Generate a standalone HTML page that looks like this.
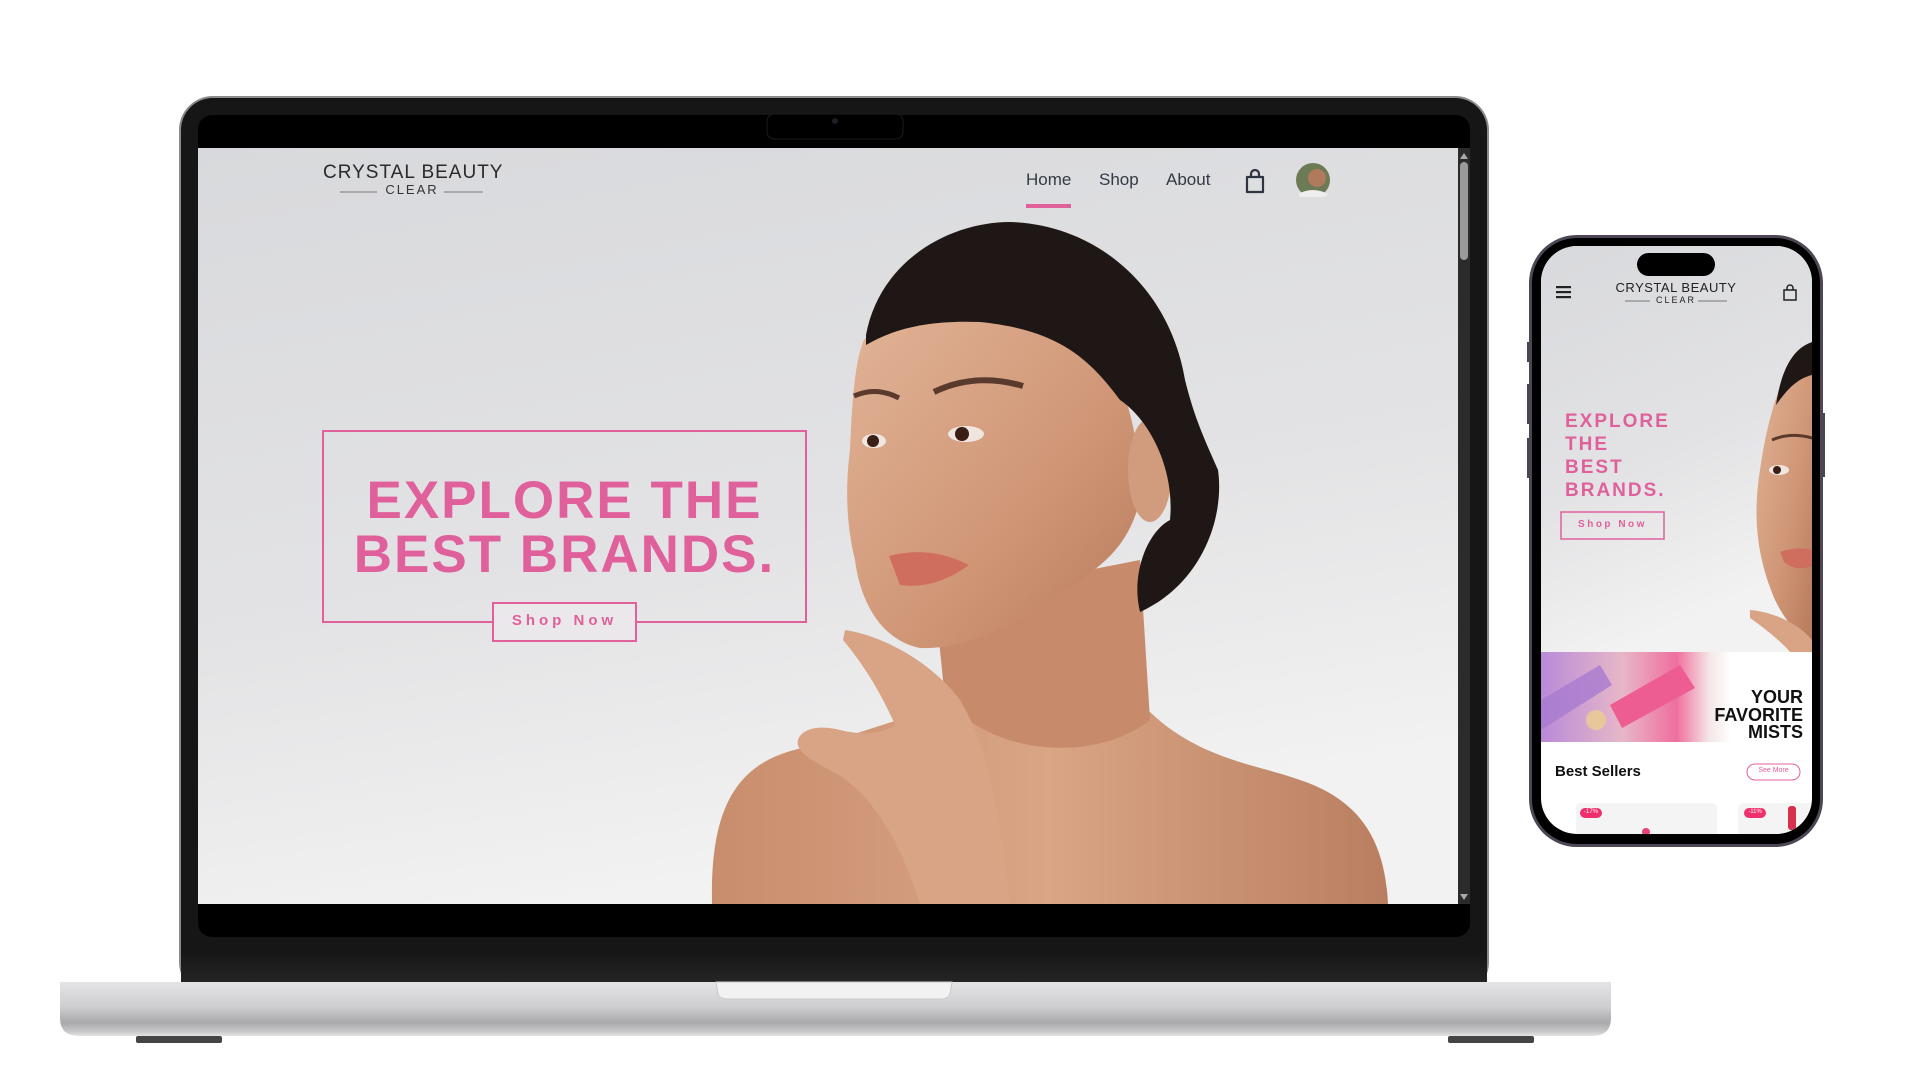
<!DOCTYPE html>
<html><head><meta charset="utf-8"><style>
*{margin:0;padding:0;box-sizing:border-box}
body{width:1920px;height:1080px;background:#fff;position:relative;overflow:hidden;font-family:"Liberation Sans",sans-serif}
.a{position:absolute;white-space:nowrap}
.pink{color:#e0609c}
</style></head><body>
<svg class="a" style="left:0;top:0" width="1920" height="1080" viewBox="0 0 1920 1080">
<defs>
<linearGradient id="web" x1="0" y1="0" x2="0.3" y2="1"><stop offset="0" stop-color="#d8d9dc"/><stop offset="0.6" stop-color="#e3e3e5"/><stop offset="1" stop-color="#f2f2f2"/></linearGradient>
<linearGradient id="base" x1="0" y1="0" x2="0" y2="1"><stop offset="0" stop-color="#e4e4e6"/><stop offset="0.45" stop-color="#cfcfd1"/><stop offset="0.75" stop-color="#a9a9ab"/><stop offset="0.92" stop-color="#c8c8ca"/><stop offset="1" stop-color="#e6e6e6"/></linearGradient>
<linearGradient id="chin" x1="0" y1="0" x2="0" y2="1"><stop offset="0" stop-color="#151515"/><stop offset="1" stop-color="#262626"/></linearGradient>
<linearGradient id="skin" x1="0" y1="0" x2="1" y2="1"><stop offset="0" stop-color="#e2b497"/><stop offset="0.6" stop-color="#cf9676"/><stop offset="1" stop-color="#b77b5c"/></linearGradient>
<linearGradient id="body" x1="0" y1="0" x2="1" y2="0"><stop offset="0" stop-color="#c88d6d"/><stop offset="0.5" stop-color="#d9a585"/><stop offset="1" stop-color="#b97e60"/></linearGradient>
<linearGradient id="strip" x1="0" y1="0" x2="1" y2="0"><stop offset="0" stop-color="#b98ad8"/><stop offset="0.3" stop-color="#e7b7c8"/><stop offset="0.5" stop-color="#ef6f9e"/><stop offset="0.62" stop-color="#f4e6e6"/><stop offset="0.7" stop-color="#fff"/></linearGradient>
<clipPath id="scr"><rect x="198" y="148" width="1260" height="756"/></clipPath>
<clipPath id="pscr"><rect x="1541" y="246" width="271" height="588" rx="36"/></clipPath>
</defs>
<rect x="179" y="96" width="1310" height="900" rx="34" fill="#8a8a8c"/>
<rect x="181" y="98" width="1306" height="896" rx="32" fill="#161616"/>
<rect x="198" y="115" width="1272" height="822" rx="14" fill="#000"/>
<rect x="181" y="951" width="1306" height="34" fill="url(#chin)"/>
<rect x="767" y="114" width="136" height="25" rx="7" fill="#000" stroke="#1c1c1c"/>
<circle cx="835" cy="121" r="3" fill="#1d1f26"/>
<rect x="198" y="148" width="1272" height="756" fill="url(#web)"/>
<g clip-path="url(#scr)">
<path d="M712 904 C710 800 740 755 820 745 L960 700 L1150 712 C1200 760 1260 765 1300 780 C1360 800 1385 840 1388 904 Z" fill="url(#body)"/>
<path d="M935 600 L1140 560 L1150 720 C1100 760 1000 760 945 700 Z" fill="#c78b6c"/>
<path d="M864 340 C900 300 980 290 1060 320 C1120 350 1140 420 1140 500 C1130 540 1110 560 1080 580 C1040 610 980 650 920 648 C880 640 860 600 855 560 C845 520 846 480 850 450 C852 400 855 360 864 340 Z" fill="url(#skin)"/>
<ellipse cx="1150" cy="470" rx="22" ry="52" fill="#d19c7d"/>
<path d="M866 335 C880 260 950 222 1010 222 C1100 225 1170 290 1185 380 C1195 420 1205 440 1218 470 C1225 520 1200 585 1140 612 C1130 570 1150 530 1170 520 C1175 470 1150 420 1120 400 C1090 360 1060 330 980 322 C930 320 895 328 866 345 Z" fill="#1f1715"/>
<path d="M854 396 Q876 386 899 398" stroke="#5a3a2c" stroke-width="5" fill="none"/>
<path d="M934 392 Q975 372 1023 386" stroke="#5a3a2c" stroke-width="6" fill="none"/>
<ellipse cx="874" cy="441" rx="12" ry="7" fill="#f0e6e0"/><circle cx="873" cy="441" r="6" fill="#3a1f14"/>
<ellipse cx="966" cy="434" rx="18" ry="8" fill="#f0e6e0"/><circle cx="962" cy="434" r="7" fill="#3a1f14"/>
<path d="M889 556 Q930 545 969 565 Q935 590 900 585 Z" fill="#cf6e5e"/>
<path d="M845 630 C880 635 930 660 960 700 C990 750 1000 820 1010 904 L920 904 C900 840 870 790 830 770 C810 760 795 750 798 740 C802 728 820 725 840 730 C860 735 880 735 895 725 C880 690 860 660 843 640 Z" fill="#d9a486"/>
</g>
<rect x="1458" y="148" width="12" height="756" fill="#2b2b2b"/>
<rect x="1460" y="162" width="8" height="98" rx="4" fill="#9a9a9a"/>
<path d="M1460 159 L1464 153 L1468 159 Z" fill="#aaa"/><path d="M1460 894 L1464 900 L1468 894 Z" fill="#aaa"/>
<rect x="323" y="431" width="483" height="191" fill="none" stroke="#e0609c" stroke-width="2"/>
<rect x="493" y="603" width="143" height="38" fill="#ebe8eb" stroke="#e0609c" stroke-width="2"/>
<line x1="340" y1="192" x2="377" y2="192" stroke="#999" stroke-width="1.5"/><line x1="444" y1="192" x2="483" y2="192" stroke="#999" stroke-width="1.5"/>
<rect x="1026" y="204" width="45" height="4" fill="#e0609c"/>
<path d="M1247 177 h16 v15 h-16 Z M1251 177 v-3 a4 4 0 0 1 8 0 v3" stroke="#2e3440" stroke-width="2.2" fill="none" stroke-linejoin="round"/>
<circle cx="1313" cy="180" r="17" fill="#6c7a55"/><circle cx="1317" cy="178" r="9" fill="#b07a5c"/><path d="M1298 194 Q1313 186 1328 194 L1325 197 L1300 197Z" fill="#eee"/>
<path d="M60 982 L1611 982 L1611 1018 Q1611 1036 1592 1036 L79 1036 Q60 1036 60 1018 Z" fill="url(#base)"/>
<path d="M716 982 L952 982 L950 994 Q948 999 940 999 L728 999 Q720 999 718 994 Z" fill="#f2f2f2" stroke="#c9c9c9"/>
<rect x="136" y="1036" width="86" height="7" rx="2" fill="#444"/>
<rect x="1448" y="1036" width="86" height="7" rx="2" fill="#444"/>
<rect x="1527" y="342" width="3" height="20" fill="#4a4450"/><rect x="1527" y="384" width="3" height="40" fill="#4a4450"/><rect x="1527" y="438" width="3" height="40" fill="#4a4450"/><rect x="1822" y="413" width="3" height="64" fill="#4a4450"/>
<rect x="1529" y="235" width="294" height="612" rx="48" fill="#4d4655"/>
<rect x="1532" y="238" width="288" height="606" rx="45" fill="#000"/>
<rect x="1541" y="246" width="271" height="588" rx="36" fill="#fff"/>
<g clip-path="url(#pscr)">
<rect x="1541" y="246" width="271" height="406" fill="url(#web)"/>
<path d="M1812 345 C1790 352 1770 400 1760 470 C1752 520 1758 560 1775 600 C1790 630 1805 640 1812 640 Z" fill="url(#skin)"/>
<path d="M1812 342 C1795 348 1782 365 1776 405 C1790 385 1800 378 1812 375 Z" fill="#1f1715"/>
<ellipse cx="1779" cy="470" rx="10" ry="5" fill="#f0e6e0"/><circle cx="1777" cy="470" r="4" fill="#3a1f14"/>
<path d="M1772 440 Q1790 432 1812 438" stroke="#5a3a2c" stroke-width="3" fill="none"/>
<path d="M1780 552 Q1798 546 1812 550 L1812 566 Q1795 572 1784 562Z" fill="#cf6e5e"/>
<path d="M1750 610 C1775 612 1800 625 1812 640 L1812 652 L1790 652 C1780 640 1760 625 1750 618Z" fill="#d9a486"/>
<rect x="1541" y="652" width="271" height="90" fill="url(#strip)"/>
<path d="M1541 700 L1600 665 L1612 685 L1541 730Z" fill="#a77ad0" opacity=".8"/>
<path d="M1610 705 L1680 665 L1695 688 L1622 728Z" fill="#ee5d92"/>
<circle cx="1596" cy="720" r="10" fill="#e8c89a"/>
<rect x="1576" y="803" width="141" height="40" rx="5" fill="#f4f4f5"/>
<rect x="1738" y="803" width="80" height="40" rx="5" fill="#f4f4f5"/>
<rect x="1580" y="808" width="22" height="10" rx="5" fill="#f0306c"/>
<rect x="1744" y="808" width="22" height="10" rx="5" fill="#f0306c"/>
<rect x="1788" y="806" width="8" height="24" rx="3" fill="#d8304e"/>
<circle cx="1646" cy="832" r="4" fill="#e8407a"/>
</g>
<rect x="1637" y="253" width="78" height="23" rx="11.5" fill="#000"/>
<rect x="1556" y="286" width="15" height="2.2" fill="#222"/><rect x="1556" y="291" width="15" height="2.2" fill="#222"/><rect x="1556" y="296" width="15" height="2.2" fill="#222"/>
<path d="M1784 290 h12 v10 h-12 Z M1787 290 v-2 a3 3 0 0 1 6 0 v2" stroke="#222" stroke-width="1.5" fill="none"/>
<line x1="1625" y1="301" x2="1650" y2="301" stroke="#555" stroke-width="0.8"/><line x1="1698" y1="301" x2="1727" y2="301" stroke="#555" stroke-width="0.8"/>
<rect x="1561" y="512" width="103" height="27" fill="none" stroke="#e0609c" stroke-width="1.5"/>
<rect x="1747" y="764" width="53" height="16" rx="8" fill="#fff" stroke="#e0609c" stroke-width="1"/>
</svg>
<div class="a" style="left:323px;top:163px;width:178px;text-align:center;font-size:19px;letter-spacing:1px;color:#2a2a2a;line-height:20px">CRYSTAL BEAUTY</div>
<div class="a" style="left:323px;top:183px;width:178px;text-align:center;font-size:13px;letter-spacing:2px;color:#333;line-height:14px">CLEAR</div>
<div class="a" style="left:1026px;top:170px;font-size:17px;color:#333a45">Home</div>
<div class="a" style="left:1099px;top:170px;font-size:17px;color:#333a45">Shop</div>
<div class="a" style="left:1166px;top:170px;font-size:17px;color:#333a45">About</div>
<div class="a pink" style="left:323px;top:474px;width:483px;text-align:center;font-size:53px;font-weight:bold;letter-spacing:2px;line-height:54px">EXPLORE THE<br>BEST BRANDS.</div>
<div class="a pink" style="left:493px;top:612px;width:143px;text-align:center;font-size:15px;font-weight:bold;letter-spacing:4px">Shop Now</div>
<div class="a" style="left:1613px;top:281px;width:126px;text-align:center;font-size:13px;letter-spacing:0.5px;color:#222;line-height:14px">CRYSTAL BEAUTY</div>
<div class="a" style="left:1613px;top:295px;width:126px;text-align:center;font-size:9px;letter-spacing:2px;color:#222;line-height:10px">CLEAR</div>
<div class="a pink" style="left:1565px;top:410px;font-size:19px;font-weight:bold;letter-spacing:2px;line-height:23px">EXPLORE<br>THE<br>BEST<br>BRANDS.</div>
<div class="a pink" style="left:1561px;top:519px;width:103px;text-align:center;font-size:10px;font-weight:bold;letter-spacing:2.5px">Shop Now</div>
<div class="a" style="right:117px;top:689px;text-align:right;font-size:18px;font-weight:bold;color:#111;line-height:17.5px">YOUR<br>FAVORITE<br>MISTS</div>
<div class="a" style="left:1555px;top:763px;font-size:15px;font-weight:bold;color:#111">Best Sellers</div>
<div class="a pink" style="left:1747px;top:767px;width:53px;text-align:center;font-size:7px">See More</div>
<div class="a" style="left:1580px;top:809px;width:22px;text-align:center;font-size:6px;color:#fff">-17%</div>
<div class="a" style="left:1744px;top:809px;width:22px;text-align:center;font-size:6px;color:#fff">-11%</div>
</body></html>
